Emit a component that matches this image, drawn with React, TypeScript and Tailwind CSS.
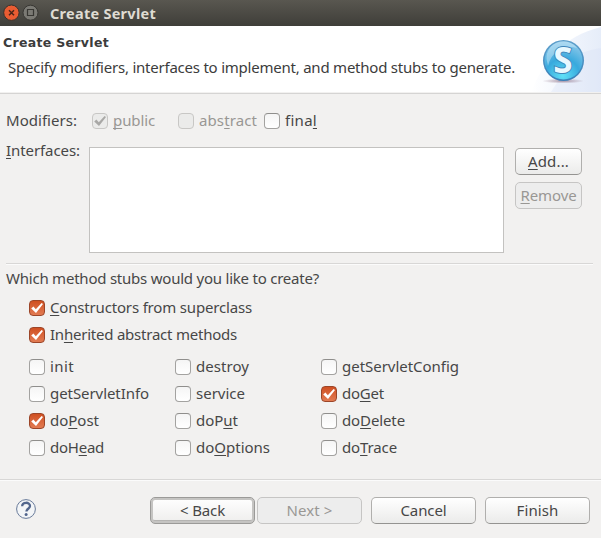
import { ReactNode, useLayoutEffect, useRef } from "react";

type FitProps = { w: number; text: string; className?: string };

/* Text set to a given width by tracking. An "_" marks the mnemonic letter after it. */
function Fit({ w, text, className = "" }: FitProps) {
  const ref = useRef<HTMLSpanElement>(null);
  useLayoutEffect(() => {
    const el = ref.current;
    if (!el) return;
    el.style.letterSpacing = "0px";
    const natural = el.getBoundingClientRect().width;
    const count = text.replace("_", "").length;
    el.style.letterSpacing = `${(w - natural) / count}px`;
  }, [w, text]);
  const i = text.indexOf("_");
  return (
    <span ref={ref} className={`block w-fit whitespace-pre ${className}`}>
      {i < 0 ? (
        text
      ) : (
        <>
          {text.slice(0, i)}
          <span className="underline decoration-1 underline-offset-2 [text-decoration-skip-ink:none]">{text[i + 1]}</span>
          {text.slice(i + 2)}
        </>
      )}
    </span>
  );
}

type CheckProps = { text: string; w: number; checked?: boolean; disabled?: boolean };

function Check({ text, w, checked, disabled }: CheckProps) {
  const box = disabled
    ? "border-[#c8c7c5] bg-[#ebebea]"
    : checked
      ? "border-[#9c4528] bg-linear-to-b from-[#cf4f20] to-[#e27b52]"
      : "border-[#a3a2a0] border-t-[#8f8e8c] bg-linear-to-b from-[#f5f5f5] to-white";
  return (
    <div className="flex h-4 items-center">
      <span className={`size-4 shrink-0 rounded-[4px] border ${box}`}>
        {checked && (
          <svg viewBox="0 0 14 14" className="size-[14px]">
            <path
              d="M1.2 7.4 3.4 5.6 5.8 8.3 11.6 2 13 3.1 6 12Z"
              fill={disabled ? "#a9a8a6" : "#fff"}
            />
          </svg>
        )}
      </span>
      <Fit text={text} w={w} className={`mb-[2px] ml-[5px] ${disabled ? "text-[#999794]" : ""}`} />
    </div>
  );
}

type ButtonProps = { children: ReactNode; className: string; kind?: "normal" | "disabled" | "default" };

function Button({ children, className, kind = "normal" }: ButtonProps) {
  const look = {
    normal: "border border-[#b0afad] border-b-[#949391] bg-linear-to-b from-white to-[#ebebea]",
    disabled: "border border-[#c6c5c4] bg-[#ededed] text-[#999794]",
    default:
      "border border-[#9b9a98] bg-linear-to-b from-white to-[#eeedec] shadow-[inset_0_0_0_2px_#c5c4c2,inset_0_-3px_0_#b5b4b2]",
  }[kind];
  return (
    <button className={`flex h-[27px] items-center justify-center rounded-[5px] pb-[2px] ${look} ${className}`}>{children}</button>
  );
}

function ServletLogo() {
  return (
    <svg viewBox="18 0 82 66" className="h-[66px] w-[82px] shrink-0">
      <defs>
        <linearGradient id="wash" x1="0" y1="0" x2="1" y2="0">
          <stop offset="0" stopColor="#fff" />
          <stop offset="0.4" stopColor="#f4f7fd" />
          <stop offset="1" stopColor="#e6edf9" />
        </linearGradient>
        <linearGradient id="rim" x1="0" y1="0" x2="0" y2="1">
          <stop offset="0" stopColor="#5d9fcb" />
          <stop offset="1" stopColor="#3a80b8" />
        </linearGradient>
        <radialGradient id="ball" cx="0.48" cy="0.9" r="0.9">
          <stop offset="0" stopColor="#5fe0f7" />
          <stop offset="0.5" stopColor="#38a9dd" />
          <stop offset="1" stopColor="#8ec9ea" />
        </radialGradient>
        <radialGradient id="shade">
          <stop offset="0" stopColor="#8a6b80" stopOpacity="0.7" />
          <stop offset="1" stopColor="#8a6b80" stopOpacity="0" />
        </radialGradient>
      </defs>
      <path d="M30 66C42 36 62 10 100 1V66Z" fill="url(#wash)" />
      <path d="M72 32Q84 24 100 22V66H50Z" fill="#d4dff5" opacity="0.3" />
      <ellipse cx="62" cy="55" rx="21" ry="2.5" fill="url(#shade)" />
      <circle cx="62.5" cy="34.5" r="20.5" fill="url(#rim)" />
      <circle cx="62.5" cy="34.5" r="19" fill="url(#ball)" />
      <path d="M45.5 33A17 17 0 0 1 76 22Q66 19 57 25 49 30 47 40Z" fill="#d4eefb" opacity="0.45" />
      <path d="M76 24A17 17 0 0 1 72 47 17 17 0 0 0 76 24Z" fill="#c5edfa" opacity="0.65" />
      <text
        transform="translate(61.8 47)"
        textAnchor="middle"
        fontFamily="Open Sans, sans-serif"
        fontWeight="700"
        fontSize="35"
        fill="#e8f8ff"
        stroke="#3f86ba"
        strokeWidth="1.8"
        paintOrder="stroke"
      >
        S
      </text>
    </svg>
  );
}

export default function App() {
  return (
    <div className="flex h-[538px] w-[601px] flex-col overflow-hidden bg-[#f2f1f0] font-['Noto_Sans',sans-serif] text-[15px] leading-5 text-[#474747]">
      <header className="flex h-[26px] shrink-0 items-center bg-linear-to-b from-[#595750] to-[#3f3e39] pl-[3px]">
        <svg viewBox="0 0 36 18" className="h-[18px] w-9">
          <circle cx="8.4" cy="8.7" r="7.7" fill="#e95c32" stroke="#34322e" />
          <path d="m6 6.3 5 5m0-5-5 5" stroke="#4c2518" strokeWidth="1.5" />
          <circle cx="27.5" cy="8.7" r="7.5" fill="#7b7a74" stroke="#383733" />
          <path d="M24.5 5.5h6v6h-6z" fill="none" stroke="#383733" strokeWidth="1.2" />
        </svg>
        <Fit text="Create Servlet" w={106} className="ml-[11px] text-[14.5px] font-bold text-[#dfdbd2]" />
      </header>
      <section className="flex h-[66px] shrink-0 bg-white">
        <div className="flex w-[519px] shrink-0 flex-col pt-[7px]">
          <Fit
            text="Create Servlet"
            w={106}
            className="ml-[3px] font-['DejaVu_Sans',sans-serif] text-[12.5px] font-bold text-[#3c3c3c]"
          />
          <Fit
            text="Specify modifiers, interfaces to implement, and method stubs to generate."
            w={507}
            className="mt-1 ml-2 text-[#3c3c3c]"
          />
        </div>
        <ServletLogo />
      </section>
      <div className="mt-px h-px shrink-0 bg-[#d5d4d3]" />

      <main className="flex h-[385px] shrink-0 flex-col pl-[6px]">
        <div className="mt-[19px] flex h-4 items-center">
          <div className="w-[86px]">
            <Fit text="Modifiers:" w={71} className="mb-[2px]" />
          </div>
          <div className="w-[86px]">
            <Check text="_public" w={42} checked disabled />
          </div>
          <div className="w-[86px]">
            <Check text="abs_tract" w={58} disabled />
          </div>
          <Check text="fina_l" w={32} />
        </div>
        <div className="mt-[18px] flex h-[106px]">
          <div className="w-[83px]">
            <Fit text="_Interfaces:" w={74} className="-mt-[7px]" />
          </div>
          <div className="h-[106px] w-[415px] border border-[#c3c2c0] bg-white" />
          <div className="ml-[11px] flex flex-col gap-[7px] pt-px">
            <Button className="w-[67px]">
              <Fit text="_Add..." w={41} />
            </Button>
            <Button className="w-[67px]" kind="disabled">
              <Fit text="_Remove" w={56} />
            </Button>
          </div>
        </div>
        <div className="mt-[10px] h-[2px] w-[587px] border-b border-[#fbfbfb] bg-[#d8d7d6]" />
        <div className="mt-[3px]">
          <Fit text="Which method stubs would you like to create?" w={313} />
        </div>
        <div className="mt-[12px] ml-[23px] flex flex-col gap-[11px]">
          <Check text="_Constructors from superclass" w={202} checked />
          <Check text="In_herited abstract methods" w={187} checked />
        </div>
        <div className="mt-4 ml-[23px] grid grid-cols-[146px_146px_146px] gap-y-[11px]">
          <Check text="init" w={24} />
          <Check text="destroy" w={53} />
          <Check text="getServletConfig" w={117} />
          <Check text="getServletInfo" w={99} />
          <Check text="service" w={49} />
          <Check text="do_Get" w={42} checked />
          <Check text="do_Post" w={49} checked />
          <Check text="doP_ut" w={42} />
          <Check text="do_Delete" w={63} />
          <Check text="doH_ead" w={54} />
          <Check text="do_Options" w={74} />
          <Check text="do_Trace" w={55} />
        </div>
      </main>

      <div className="h-[2px] shrink-0 border-b border-[#fbfbfb] bg-[#d8d7d6]" />
      <footer className="flex items-start pt-4">
        <svg viewBox="0 0 20 20" className="mt-[2px] ml-4 size-5">
          <circle cx="10" cy="10" r="9.4" fill="#f3f5f7" stroke="#687a99" />
          <path d="M6.2 7.2C6.2 2.7 14 2.6 14 7.1c0 2.6-3.6 2.7-3.6 5.4" fill="none" stroke="#51658c" strokeWidth="2.3" />
          <circle cx="10.1" cy="15.5" r="1.5" fill="#51658c" />
        </svg>
        <Button className="ml-[114px] w-[105px]" kind="default">
          <Fit text="< Back" w={45} />
        </Button>
        <Button className="ml-[2px] w-[105px]" kind="disabled">
          <Fit text="Next >" w={46} />
        </Button>
        <Button className="ml-[9px] w-[105px]">
          <Fit text="Cancel" w={46} />
        </Button>
        <Button className="ml-[9px] w-[105px]">
          <Fit text="Finish" w={42} />
        </Button>
      </footer>
    </div>
  );
}
